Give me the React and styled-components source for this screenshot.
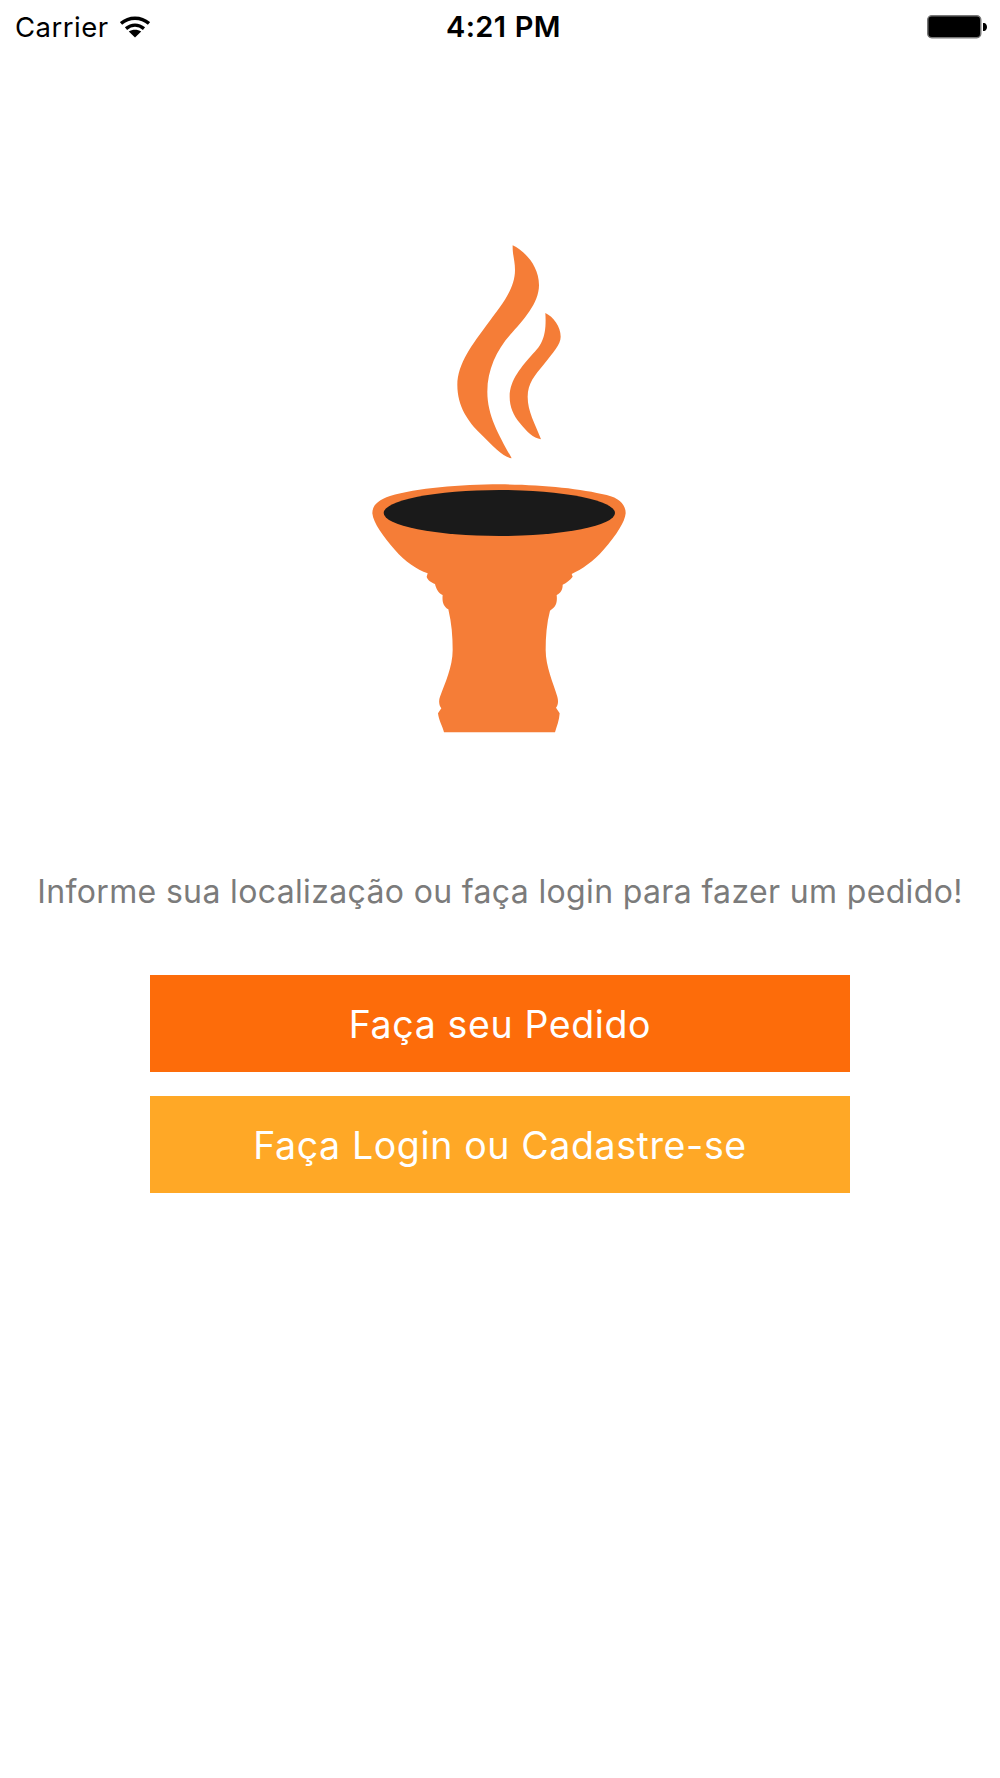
import React from "react";
import styled, { createGlobalStyle } from "styled-components";

const Global = createGlobalStyle`
  html, body { margin: 0; padding: 0; background: #fff; }
  * { box-sizing: border-box; }
`;

const Screen = styled.div`
  width: 1000px;
  height: 1778px;
  background: #fff;
  font-family: Inter, "Liberation Sans", sans-serif;
  display: flex;
  flex-direction: column;
  align-items: center;
  overflow: hidden;
`;

const StatusBar = styled.div`
  width: 100%;
  height: 53px;
  padding: 0 13px 0 15px;
  display: grid;
  grid-template-columns: 1fr auto 1fr;
  align-items: center;
  color: #000;
`;

const StatusLeft = styled.div`
  display: flex;
  align-items: center;
  gap: 11px;
  font-size: 27.5px;
  letter-spacing: 0.5px;
`;

const Clock = styled.div`
  font-size: 29px;
  font-weight: 600;
  letter-spacing: 0.3px;
  word-spacing: 1px;
  margin: -1px 0 0 5px;
`;

const StatusRight = styled.div`
  display: flex;
  justify-content: flex-end;
`;

const Logo = styled.svg`
  display: block;
  width: 320px;
  height: 530px;
  margin-top: 167px;
  flex: none;
`;

const Prompt = styled.p`
  margin: 122px 0 0;
  font-size: 32px;
  line-height: 40px;
  letter-spacing: 0.35px;
  color: #7b7b7b;
  white-space: nowrap;
  text-align: center;
`;

const Actions = styled.div`
  width: 700px;
  margin-top: 63px;
  display: flex;
  flex-direction: column;
  gap: 24px;
`;

const ActionButton = styled.button`
  display: block;
  width: 100%;
  height: 97px;
  border: 0;
  padding: 1px 0 0;
  background: ${(p) => p.$bg};
  color: #fff;
  font-family: inherit;
  font-size: 37.5px;
  letter-spacing: 0.62px;
  text-align: center;
`;

const WifiIcon = () => (
  <svg width="30" height="22" viewBox="0 0 30 22">
    <path d="M1 7.500C9 .5 21 .5 29 7.500" fill="none" stroke="#000" strokeWidth="3.4" />
    <path d="M6 12.600C11.500 8 18.500 8 24 12.600" fill="none" stroke="#000" strokeWidth="3.4" />
    <path d="M15 21.500L8.800 15.600C12.400 13.200 17.600 13.200 21.200 15.600Z" fill="#000" />
  </svg>
);

const BatteryIcon = () => (
  <svg width="60" height="24" viewBox="0 0 60 24">
    <rect x="0.75" y="0.75" width="53" height="22" rx="4" fill="#000" stroke="#777" strokeWidth="1.5" />
    <path d="M56 8h1c1.700 0 3 1.800 3 4s-1.300 4-3 4h-1Z" fill="#000" />
  </svg>
);

const BRAND = "#f57d37";

const BowlLogo = () => (
  <Logo viewBox="0 0 960 1590">
    <path
      fill={BRAND}
      d="M518 76C550 90 597 135 597 195C597 250 550 300 510 345C470 390 442 450 442 515C442 590 480 650 515 715C490 712 460 680 420 640C385 605 352 560 352 495C352 430 400 370 440 315C480 260 525 210 525 150C525 120 517 105 518 76Z"
    />
    <path
      fill={BRAND}
      d="M616 279C640 290 662 320 662 350C662 375 640 395 610 435C585 465 563 490 563 530C563 575 585 610 603 658C580 655 560 635 540 610C520 585 509 560 509 530C509 480 545 440 580 400C610 370 620 340 616 279Z"
    />
    <g transform="translate(0 780)">
      <path
        fill={BRAND}
        d="M480 13C600 13 720 25 800 45C840 55 857 75 857 100C855 125 830 165 790 210C760 245 725 268 695 282L698 290C690 300 680 308 668 314C668 330 662 338 650 345C652 365 650 380 630 392C620 430 617 470 617 510C617 560 640 610 652 650C656 665 654 675 648 683L659 700C658 720 650 740 645 757L312 757C308 740 296 720 294 700L304 685C296 675 296 660 300 650C315 610 338 560 338 510C338 470 335 430 325 388C310 380 306 365 308 345C295 340 288 325 285 312C275 308 262 300 260 290L263 280C230 268 195 245 165 210C130 170 100 130 97 100C97 75 115 60 150 48C230 25 360 13 480 13Z"
      />
      <ellipse cx="478" cy="99" rx="347" ry="69" fill="#1a1a1a" />
    </g>
  </Logo>
);

export default function App() {
  return (
    <Screen>
      <Global />
      <StatusBar>
        <StatusLeft>
          <span>Carrier</span>
          <WifiIcon />
        </StatusLeft>
        <Clock>4:21 PM</Clock>
        <StatusRight>
          <BatteryIcon />
        </StatusRight>
      </StatusBar>
      <BowlLogo />
      <Prompt>Informe sua localização ou faça login para fazer um pedido!</Prompt>
      <Actions>
        <ActionButton $bg="#fd6c0a">Faça seu Pedido</ActionButton>
        <ActionButton $bg="#ffa826">Faça Login ou Cadastre-se</ActionButton>
      </Actions>
    </Screen>
  );
}
